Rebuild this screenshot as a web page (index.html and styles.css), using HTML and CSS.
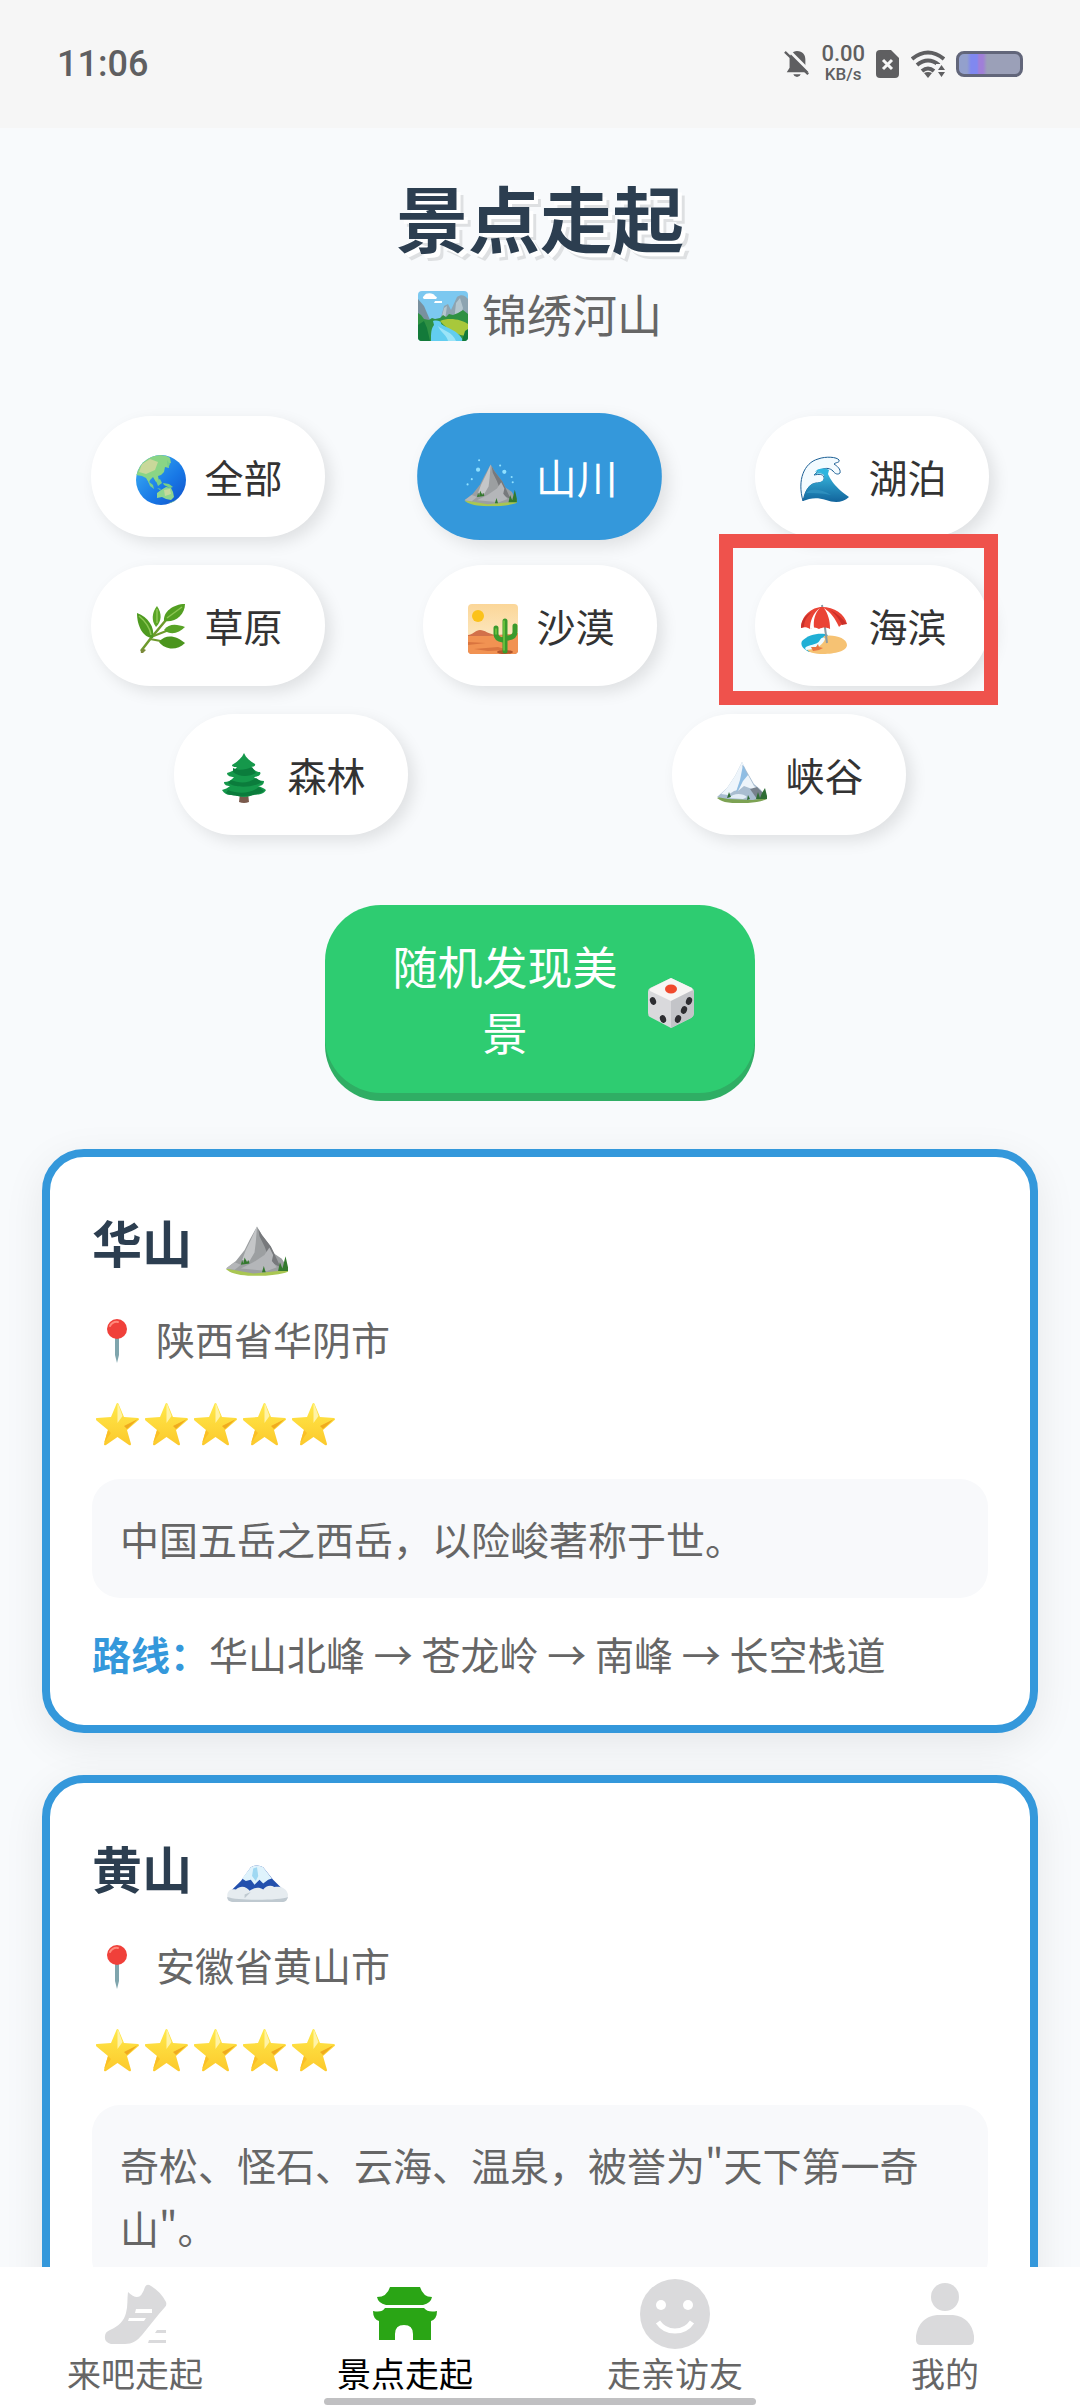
FILE: index.html
```html
<!DOCTYPE html>
<html lang="zh-CN">
<head>
<meta charset="utf-8">
<meta name="viewport" content="width=device-width, initial-scale=1">
<title>景点走起</title>
<link rel="stylesheet" href="styles.css">
</head>
<body>
<svg class="sprite" aria-hidden="true">
  <defs>
    <linearGradient id="g-sea" x1="0" y1="0" x2="1" y2="1"><stop offset="0" stop-color="#3fb4f5"/><stop offset=".6" stop-color="#1878e6"/><stop offset="1" stop-color="#1150c8"/></linearGradient>
    <linearGradient id="g-wave" x1="0" y1="0" x2="0" y2="1"><stop offset="0" stop-color="#3cc0e4"/><stop offset="1" stop-color="#12649c"/></linearGradient>
    <linearGradient id="g-dusk" x1="0" y1="0" x2="0" y2="1"><stop offset="0" stop-color="#fbd698"/><stop offset="1" stop-color="#fdf0d2"/></linearGradient>
    <linearGradient id="g-star" x1="0" y1="0" x2="0" y2="1"><stop offset="0" stop-color="#ffe94a"/><stop offset="1" stop-color="#fcc92c"/></linearGradient>
    <clipPath id="c-card"><rect width="50" height="50" rx="4"/></clipPath>
    <clipPath id="c-globe"><circle cx="25" cy="25" r="25"/></clipPath>
  </defs>
  <symbol id="i-park" viewBox="0 0 50 50">
    <g clip-path="url(#c-card)">
      <rect width="50" height="50" fill="#7cc8f0"/>
      <path d="M6 5c2-4 10-3 11 0 3 1 2 3 0 3H7C5 8 4 6 6 5zM17 10h7v2h-8z" fill="#fff"/>
      <path d="M0 8l6 7 6 14H0z" fill="#79909e"/>
      <path d="M22 30l4-15 4-2 3 6 6-13c4-3 8-2 11 2v25H22z" fill="#8da4b1"/>
      <path d="M38 12l4-5 3 10-4 13h-5zM26 17l3-2-2 14h-4z" fill="#b4c6cf"/>
      <path d="M0 22l3 2 3 4 5 1 3-2 3 1 5-1 3-3 3 2 3-3 4 1 5-2 5-3 5 4v29H0z" fill="#2f9143"/>
      <path d="M22 30c10-4 22-1 28 3v12c-10 0-20-6-28-15z" fill="#a8c83b"/>
      <path d="M15 30c4-1 8 0 8 2 0 4 18 6 22 18H13c0-8 0-12 3-16z" fill="#62cdf0"/>
      <path d="M20 35c4 4 15 6 18 15h-8c-1-6-8-9-10-15z" fill="#9be4f8"/>
      <path d="M0 34l6-4 3 7 3 13H0zM44 50l3-10 3-2v12z" fill="#137a3a"/>
    </g>
  </symbol>
  <symbol id="i-globe" viewBox="0 0 50 50">
    <g clip-path="url(#c-globe)">
      <rect width="50" height="50" fill="url(#g-sea)"/>
      <path d="M11 3C18-1 30-1 34 3l1 5-3 1 1 4-4-1-1 5-3 3-3 1 1 5-3 1-3-5-3 3-1 3-3-5-4-2-6-1-3 1C0 15 4 8 11 3z" fill="#8ad585"/>
      <path d="M6 9l8-5 8 3-3 8-9 4-7-2z" fill="#c9d89a"/>
      <path d="M12 26l5 4 1 4-4-3zM20 26l4-2 2 4-4 3zM27 28l6 1 4 3-3 1-6-3zM21 33l4 1-1 1zM31 5l3 4-2 4-1-4z" fill="#79cf88"/>
      <path d="M21 38l4-3 5-3 5 1 2 4 1 5-3 3-5-1-4-2-5 1z" fill="#8fd58f"/>
      <path d="M28 35l6-1 1 5-6 2z" fill="#c6d99c"/>
      <path d="M38 46l3-2-4 4h-4z" fill="#7acc8a"/>
    </g>
  </symbol>
  <symbol id="i-mount" viewBox="0 0 50 50">
    <path d="M0 44.500c8-3 40-4 50-1v3c-10 4-38 5-47 0z" fill="#a9c653"/>
    <path d="M0 44l8-6 7-9 4-8 6-11 4 7 7 9 3 6 6 4 5 8-8 2-20 2z" fill="#9c9fa1"/>
    <path d="M25 10l-5 11-4 8-3 8 6 1 4-7 1-8z" fill="#c4c6c8"/>
    <path d="M26 12l3 5 7 9 3 6 5 11-8-4-5-13-4-8z" fill="#77797c"/>
    <path d="M12 44l10-5 9-6 4-6 3 6-1 5 4 5-8 3-10-1z" fill="#b4b6b9"/>
    <path d="M0 44l7-5 5 2-5 4z" fill="#b4b6b9"/>
    <path d="M12 41l1-4 1 3 1-5 2 4 1-2 1 3zM29 47l1.500-5 1.500 5zM42 46l1.500-7 2 5 2.500-10 2 9v3z" fill="#33792d"/>
  </symbol>
  <symbol id="i-wave" viewBox="0 0 50 50">
    <path d="M3 46C-3 25 4 8 18 4c8-3 19-2 21 1 1 3-3 2-5 4 3 2 7 5 6 9-2 2-5 1-7-2-3-3-7-3-10-2-4 1-6 3-9 6 5-1 9-1 10 2 1 5-4 6-8 6-7 1-11 8-13 18z" fill="#f3fbff" stroke="#1b5f95" stroke-width="1"/>
    <path d="M3 46c2-9 5-17 12-18 5 0 10-2 9-7-1-3-5-3-10-1 5-5 10-6 12-6 3 8 6 16 23 28-6 6-15 6-23 3-9-3-16-2-23 1z" fill="url(#g-wave)"/>
    <path d="M17 15c3-2 9-2 12 0l-2 8-4-5c-2-2-5-2-8-1z" fill="#2cb5df"/>
    <path d="M6 38c5-6 16-4 25 2-9-2-18-2-25-2z" fill="#2e8fbe"/>
  </symbol>
  <symbol id="i-herb" viewBox="0 0 50 50">
    <path d="M5 47l10-13L30 16" fill="none" stroke="#6e9a2c" stroke-width="2.500"/>
    <path d="M15 33L38 24M14 35l16 3" fill="none" stroke="#6e9a2c" stroke-width="2"/>
    <path d="M5 49c-1-2 1-5 3-4l2 1-3 3z" fill="#7b8a3a"/>
    <path d="M17 34C7 34 1 22 1 9c11 4 18 14 16 25z" fill="#4e9a20"/>
    <path d="M20 23c-5-6-4-15 1-21 5 7 5 15-1 21z" fill="#5aa526"/>
    <path d="M28 17C27 8 37 0 49 0c0 11-10 19-21 17z" fill="#539f22"/>
    <path d="M28 26c5-7 13-6 21-3-6 6-14 9-21 3z" fill="#58a326"/>
    <path d="M23 38c7-9 18-6 26 1-8 8-20 7-26-1z" fill="#4b951e"/>
    <path d="M3 12c6 5 11 12 12 19M21 5v14M46 3L31 14" fill="none" stroke="#8cc653" stroke-width="1.500"/>
  </symbol>
  <symbol id="i-desert" viewBox="0 0 50 50">
    <g clip-path="url(#c-card)">
      <rect width="50" height="50" fill="url(#g-dusk)"/>
      <circle cx="10" cy="12" r="6" fill="#fbc21b"/>
      <path d="M0 31c4 0 8-5 12-5 5 0 8 4 16 5l22-1v20H0z" fill="#d2714a"/>
      <path d="M0 32c12 0 28 1 50-3v21H0z" fill="#f19252"/>
      <path d="M0 38l18 1-18 2zM6 45l24-2 10 3-20 1zM30 36l14-1-8 3z" fill="#d9743f"/>
      <ellipse cx="37" cy="48" rx="8" ry="2" fill="#b3552c"/>
    </g>
    <path d="M37 17v30M28 24v6q0 5 7 6M47 22v6q0 5-7 6" fill="none" stroke="#3a9a2c" stroke-width="5" stroke-linecap="round"/>
    <path d="M36 17v29M28 25v5" fill="none" stroke="#76c93f" stroke-width="1.500" stroke-linecap="round"/>
  </symbol>
  <symbol id="i-beach" viewBox="0 0 50 50">
    <path d="M2 37c6-7 20-9 26-6l-6 12-13 5c-6-3-9-7-7-11z" fill="#20afd5"/>
    <path d="M24 32c10-2 23 2 23 9 0 6-12 9-24 9-8 0-16-2-16-5 5-5 12-1 17-13z" fill="#f6c273"/>
    <path d="M5 44c3-4 12-2 15-8 2-3 4-3 5-1-2 6-8 10-19 11z" fill="#f0fbff"/>
    <path d="M11 43l5 0 2-3 1 3 4 1-4 2-6 1z" fill="#ea7441"/>
    <path d="M22 1l5 38" stroke="#8a9aa2" stroke-width="2"/>
    <path d="M1 24C1 12 12 3 22 3c12 0 23 7 25 17-4-1-6 1-8 3-4-2-7-1-9 2-4-2-7-2-11 0-3-2-6-2-9 0-3-2-6-2-9-1z" fill="#ea4335"/>
    <path d="M20 4c-5 5-7 12-6 20l-4 1c0-8 3-16 10-21zM24 4c7 5 11 10 15 19l-9 2c0-9-2-15-6-21z" fill="#fff"/>
    <path d="M30 6c7 3 12 8 17 14l-5 1C39 14 34 9 30 6zM12 8C6 13 4 18 4 23l-3 1C1 17 5 11 12 8z" fill="#c9302a"/>
  </symbol>
  <symbol id="i-tree" viewBox="0 0 50 50">
    <path d="M21 40h8l1 9q-5 2-10 0z" fill="#7a5a4c"/>
    <path d="M25 0c2 5 6 8 11 11 1 2-2 3-4 3 3 3 6 5 9 5 2 3-3 5-6 5 3 3 7 4 10 4 0 4-3 5-6 5 3 1 6 2 8 4-3 5-9 5-12 4-5 4-15 4-20 0-4 2-9 1-12-4 3-1 6-2 8-4-3 0-6-1-6-4 4 0 8-2 10-5-3 0-7-1-7-4 4-1 8-3 10-6-2 0-5 0-5-2 5-3 10-7 12-12z" fill="#15984b"/>
    <path d="M14 15c6 3 12 2 19-1 2 3 3 5 4 6-7 4-17 4-23-1zM12 27c8 3 16 4 25-2l6 4c-9 6-27 6-34 1zM9 37c10 4 22 4 31-3l5 4c-8 6-29 7-38 2z" fill="#0b7c3c"/>
  </symbol>
  <symbol id="i-snow" viewBox="0 0 50 50">
    <path d="M0 45c9-5 41-6 50-1v2c-9 5-40 6-47 1z" fill="#7ca253"/>
    <path d="M0 44l10-9 8-12L25 9l4 8 8 14 6 5 7 8-14 3-25-1z" fill="#a9bdd0"/>
    <path d="M25 9l-7 14-8 12-6 6 7 1 6-4 4-1 4-12 2-7-2-6 3 2z" fill="#eef5fb"/>
    <path d="M26 12l6 13-4 6-9 8 4-12z" fill="#8fbde3"/>
    <path d="M31 22l6 11 6 4-8-1-8-3-6 5 5-10z" fill="#edf4fa"/>
    <path d="M33 36l7-2 6 6 4 4-10 2z" fill="#77818c"/>
    <path d="M12 45c4-5 14-5 18-1l-4 2z" fill="#e2edf6"/>
    <path d="M10 45l2-6 2 5zM30 47l1-5 2 4zM39 46l2-7 2 6 2-5 3-5 2 8v3z" fill="#2f6d35"/>
  </symbol>
  <symbol id="i-fuji" viewBox="0 0 50 50">
    <path d="M4 41l8-8 8-11q5-3 10 0l8 10 10 10z" fill="#2350ad"/>
    <path d="M13 31l7-9q5-3 10 0l7 9-3 1-4 3-3-3-4 4-3-4-4 1z" fill="#dff3fc"/>
    <path d="M22 23l3-1 1 7-2 4-3-4z" fill="#9fd8f2"/>
    <path d="M1 45c0-5 4-6 7-5 4-4 9-2 11 1 4-3 8-3 11-1 2-3 6-4 9-2 5-1 10 1 11 6 0 5-2 6-5 6H7c-4 0-6-1-6-5z" fill="#e6ecf0"/>
    <path d="M1 46c8 3 42 3 49 0-1 3-2 4-5 4H7c-4 0-6-1-6-4zM15 44l5-2-5 5z" fill="#bfc9d0"/>
  </symbol>
  <symbol id="i-dice" viewBox="0 0 50 50">
    <path d="M25 0l21 10q2 1 2 4v21q0 3-3 5L25 50 4 39q-2-1-2-4V14q0-3 2-4z" fill="#d9d9dc"/>
    <path d="M25 0l21 10q1 2-1 3L25 23 4 13q-1-2 1-3z" fill="#f7f5f4"/>
    <path d="M25 23l20-10q3-1 3 2v20q0 3-3 5L25 50z" fill="#c3c4c8"/>
    <ellipse cx="25" cy="11" rx="6" ry="4.500" fill="#f0492c"/>
    <g fill="#2d2d31"><ellipse cx="7" cy="23" rx="3" ry="4" transform="rotate(-20 7 23)"/><ellipse cx="17" cy="41" rx="3" ry="4" transform="rotate(-20 17 41)"/><ellipse cx="43" cy="23" rx="3" ry="4" transform="rotate(20 43 23)"/><ellipse cx="38" cy="32" rx="3" ry="4" transform="rotate(20 38 32)"/><ellipse cx="32" cy="41" rx="3" ry="4" transform="rotate(20 32 41)"/></g>
  </symbol>
  <symbol id="i-pin" viewBox="0 0 22 44">
    <path d="M9 18h4v18l-2 8-2-8z" fill="#7fa5ad"/>
    <circle cx="11" cy="10" r="10" fill="#f0403a"/>
    <path d="M4 7q3-5 8-4" fill="none" stroke="#ff8a7c" stroke-width="2" stroke-linecap="round"/>
  </symbol>
  <symbol id="i-star" viewBox="0 0 43 43">
    <path d="M21.500 0q1 0 1.500 2l5 12 14 1q2 1 0 2.500L31 27l4 14q0 2-2 1l-11.500-8L10 42q-2 1-2-1l4-14L.5 17.500Q-1 15 1 15l14-1 5-12q.5-2 1.500-2z" fill="url(#g-star)"/>
    <path d="M21.500 1l1 1 4 11-5 7z" fill="#fff3a6"/>
    <path d="M42 16l-11 10-3-3z" fill="#f0ab1e"/>
    <path d="M8 40l4-13 3 3z" fill="#fbbf25"/>
  </symbol>
</svg>

<div class="app">
  <div class="status">
    <time class="clock">11:06</time>
    <div class="indicators">
      <svg width="26" height="28" viewBox="0 0 28 30" aria-label="静音">
        <path d="M14 1c6 0 9 4 9 9v9l4 5H3l3-5V10c0-5 3-9 8-9zM10 26h8q-1 3-4 3t-4-3z" fill="#5f5f61"/>
        <path d="M4-1l26 26" stroke="#f6f6f6" stroke-width="3"/>
        <path d="M1 2l25 24" stroke="#5f5f61" stroke-width="2.500"/>
      </svg>
      <div class="speed"><span class="rate">0.00</span><span class="unit">KB/s</span></div>
      <svg width="24" height="28" viewBox="0 0 24 28" aria-label="无卡">
        <path d="M4 0h11l8 8v16q0 4-4 4H4q-4 0-4-4V4q0-4 4-4z" fill="#5f5f61"/>
        <path d="M7 10l9 9M16 10l-9 9" stroke="#f6f6f6" stroke-width="3"/>
      </svg>
      <svg width="34" height="28" viewBox="0 0 34 28" aria-label="无线网络">
        <g fill="none" stroke="#5f5f61" stroke-width="4"><path d="M1 9q16-13 32 0"/><path d="M6 15q11-9 22 0"/><path d="M11 21q6-5 12 0"/></g>
        <path d="M13 23q4-2 8 0l-4 5z" fill="#5f5f61"/>
        <path d="M25 14h9v14h-9z" fill="#f6f6f6"/>
        <path d="M27 20l3.500-5 3.500 5zM27 22h7l-3.500 5z" fill="#5f5f61"/>
      </svg>
      <div class="battery"></div>
    </div>
  </div>

  <main class="page">
    <header class="hero">
      <h1>景点走起</h1>
      <p><svg class="emoji"><use href="#i-park"/></svg>锦绣河山</p>
    </header>

    <div class="filters">
      <button class="chip"><svg class="emoji"><use href="#i-globe"/></svg>全部</button>
      <button class="chip active"><svg class="emoji" viewBox="0 0 50 50"><use href="#i-mount" width="50" height="50"/><g fill="#8fe0ff"><circle cx="13" cy="15" r="2"/><circle cx="38" cy="17" r="2"/><circle cx="7" cy="24" r="1"/><circle cx="45" cy="22" r="1"/><circle cx="14" cy="6" r="1"/><circle cx="34" cy="11" r="1"/><circle cx="3" cy="29" r="1"/><circle cx="46" cy="27" r="1"/></g></svg>山川</button>
      <button class="chip"><svg class="emoji"><use href="#i-wave"/></svg>湖泊</button>
      <button class="chip"><svg class="emoji"><use href="#i-herb"/></svg>草原</button>
      <button class="chip"><svg class="emoji"><use href="#i-desert"/></svg>沙漠</button>
      <button class="chip marked"><svg class="emoji"><use href="#i-beach"/></svg>海滨</button>
      <button class="chip"><svg class="emoji"><use href="#i-tree"/></svg>森林</button>
      <button class="chip"><svg class="emoji"><use href="#i-snow"/></svg>峡谷</button>
    </div>

    <button class="random"><span>随机发现美景</span><svg class="emoji"><use href="#i-dice"/></svg></button>

    <section class="cards">
      <article class="card">
        <h2>华山<svg class="peak"><use href="#i-mount"/></svg></h2>
        <p class="place"><svg class="pin"><use href="#i-pin"/></svg>陕西省华阴市</p>
        <div class="stars" role="img" aria-label="五星"><svg><use href="#i-star"/></svg><svg><use href="#i-star"/></svg><svg><use href="#i-star"/></svg><svg><use href="#i-star"/></svg><svg><use href="#i-star"/></svg></div>
        <p class="desc">中国五岳之西岳，以险峻著称于世。</p>
        <p class="route"><strong>路线：</strong>华山北峰 → 苍龙岭 → 南峰 → 长空栈道</p>
      </article>
      <article class="card">
        <h2>黄山<svg class="peak"><use href="#i-fuji"/></svg></h2>
        <p class="place"><svg class="pin"><use href="#i-pin"/></svg>安徽省黄山市</p>
        <div class="stars" role="img" aria-label="五星"><svg><use href="#i-star"/></svg><svg><use href="#i-star"/></svg><svg><use href="#i-star"/></svg><svg><use href="#i-star"/></svg><svg><use href="#i-star"/></svg></div>
        <p class="desc">奇松、怪石、云海、温泉，被誉为"天下第一奇山"。</p>
      </article>
    </section>
  </main>

  <nav class="tabs">
    <a href="#go"><svg viewBox="0 0 72 70">
      <path d="M29 13Q34 18 38 18 43 18 46 8 48 4 52 7 62 13 67 23 68 26 66 28C58 37 51 46 43 56 38 62 33 65 26 65H12Q5 63 6 57 6 53 11 51C20 47 25 42 27 34 29 27 28 20 29 13z"/>
      <path d="M37 30h16v4H36zM30 39h17l-2 3H29z" fill="#fff"/>
      <path d="M58 51h9v3H56zM50 61h17v3H49z"/></svg>来吧走起</a>
    <a href="#spots" class="current" aria-current="page"><svg viewBox="0 0 72 70">
      <path d="M21 8h30q3 10 12 10-1 6-9 8H17q-8-2-9-8 10 0 13-10z"/>
      <path d="M16 29h39q4 5 13 3 0 8-6 10v19H44v-6q0-9-9-9t-9 9v6H10V42q-6-2-6-10 9 2 12-3z"/></svg>景点走起</a>
    <a href="#friends"><svg viewBox="0 0 72 70">
      <circle cx="36" cy="35" r="35"/>
      <g fill="#fff"><circle cx="22" cy="26" r="5"/><circle cx="49" cy="26" r="5"/></g>
      <path d="M19 43q6 9 17 9t17-9" fill="none" stroke="#fff" stroke-width="5"/></svg>走亲访友</a>
    <a href="#me"><svg viewBox="0 0 72 70">
      <circle cx="36" cy="18" r="14"/>
      <path d="M28 36h16q18 2 21 21v4q0 5-5 5H12q-5 0-5-5v-4q3-19 21-21z"/></svg>我的</a>
  </nav>
</div>
</body>
</html>
```
FILE: styles.css
```css
* { box-sizing: border-box; }

body {
  margin: 0;
  background: #f8fafc;
  color: #666;
  font-family: "Noto Sans CJK SC", sans-serif;
  font-size: 39px;
  line-height: 63px;
}

h1, h2, p { margin: 0; }

button {
  border: 0;
  margin: 0;
  font: inherit;
}

.sprite {
  position: absolute;
  width: 0;
  height: 0;
}

.emoji {
  flex: none;
  width: 50px;
  height: 50px;
}

.app {
  display: flex;
  flex-direction: column;
  height: 100vh;
}

/* status bar */
.status {
  flex: none;
  display: flex;
  align-items: center;
  justify-content: space-between;
  height: 128px;
  padding: 0 57px;
  background: #f6f6f6;
  color: #5f5f61;
  font-family: Roboto, sans-serif;
  font-weight: 500;
}

.clock { font-size: 36px; }

.indicators {
  display: flex;
  align-items: center;
  gap: 11px;
}

.speed {
  display: flex;
  flex-direction: column;
  align-items: center;
}

.rate {
  font-size: 22px;
  line-height: 20px;
}

.unit {
  font-size: 17px;
  line-height: 20px;
}

.battery {
  width: 67px;
  height: 26px;
  border: 3px solid #62667a;
  border-radius: 8px;
  background: linear-gradient(90deg, #93a0cc 0 8px, #8088f0 12px 18px, #a07fd8 20px 24px, #9ba0b8 28px);
}

/* scrolling page */
.page {
  flex: 1;
  min-height: 0;
  overflow-y: auto;
  scrollbar-width: none;
  padding: 40px 42px 0;
}

.hero { text-align: center; }

.hero h1 {
  color: #2c3e50;
  font-size: 72px;
  font-weight: 700;
  line-height: 96px;
  text-shadow: 4px 4px 0 #fff, 7px 7px 0 rgba(0, 0, 0, .1);
}

.hero p {
  display: flex;
  align-items: center;
  justify-content: center;
  gap: 14px;
  margin-top: 18px;
  font-size: 45px;
  line-height: 64px;
}

.hero .emoji { margin-top: 4px; }

.filters {
  display: flex;
  flex-wrap: wrap;
  justify-content: space-around;
  gap: 28px;
  margin: 70px 14px;
}

.chip {
  position: relative;
  display: flex;
  align-items: center;
  height: 121px;
  padding: 0 42px;
  border-radius: 60px;
  background: #fff;
  color: #333;
  box-shadow: 6px 6px 16px rgba(0, 0, 0, .1);
}

.chip .emoji { margin: 6px 18px 0 3px; }

.chip.active {
  background: #3498db;
  color: #fff;
  transform: scale(1.05);
}

/* callout frame over the highlighted filter */
.chip.marked::after {
  content: "";
  position: absolute;
  inset: -31px -9px -19px -36px;
  border: 14px solid #ef524c;
}

.random {
  display: flex;
  align-items: center;
  justify-content: center;
  gap: 14px;
  width: 430px;
  margin: 0 auto 56px;
  padding: 28px 56px;
  border-radius: 56px;
  background: #2ecc71;
  color: #fff;
  font-size: 45px;
  line-height: 66px;
  box-shadow: 0 8px 0 #2fae64;
}

.random .emoji { margin: 8px 3px 0; }

.cards {
  display: grid;
  gap: 42px;
}

.card {
  padding: 42px;
  border: 8px solid #3498db;
  border-radius: 42px;
  background: #fff;
  box-shadow: 0 11px 42px rgba(0, 0, 0, .08);
}

.card h2 {
  display: flex;
  align-items: center;
  gap: 34px;
  color: #2c3e50;
  font-size: 50px;
  font-weight: 700;
  line-height: 84px;
}

.peak {
  width: 62px;
  height: 62px;
  margin-top: 8px;
}

.place {
  display: flex;
  align-items: center;
  gap: 28px;
  margin: 24px 0 33px;
  padding-left: 14px;
}

.pin {
  width: 22px;
  height: 44px;
  margin-top: 4px;
}

.stars {
  display: flex;
  gap: 6px;
  padding-left: 4px;
}

.stars svg {
  width: 43px;
  height: 43px;
}

.desc {
  margin: 33px 0 24px;
  padding: 28px;
  border-radius: 28px;
  background: #f8f9fb;
}

.card:has(.route) { padding-bottom: 40px; }

.route strong { color: #3498db; }

/* bottom tabs */
.tabs {
  flex: none;
  position: relative;
  display: grid;
  grid-template-columns: repeat(4, 1fr);
  padding: 12px 0 11px;
  background: #fff;
}

.tabs a {
  display: flex;
  flex-direction: column;
  align-items: center;
  color: #666;
  font-size: 34px;
  line-height: 48px;
  text-decoration: none;
}

.tabs svg {
  width: 72px;
  height: 70px;
  fill: #dadadc;
}

.tabs .current { color: #000; }
.tabs .current svg { fill: #2aa515; }

.tabs::after {
  content: "";
  position: absolute;
  left: 30%;
  right: 30%;
  bottom: 3px;
  height: 7px;
  border-radius: 4px;
  background: #c0c0c2;
}
```
